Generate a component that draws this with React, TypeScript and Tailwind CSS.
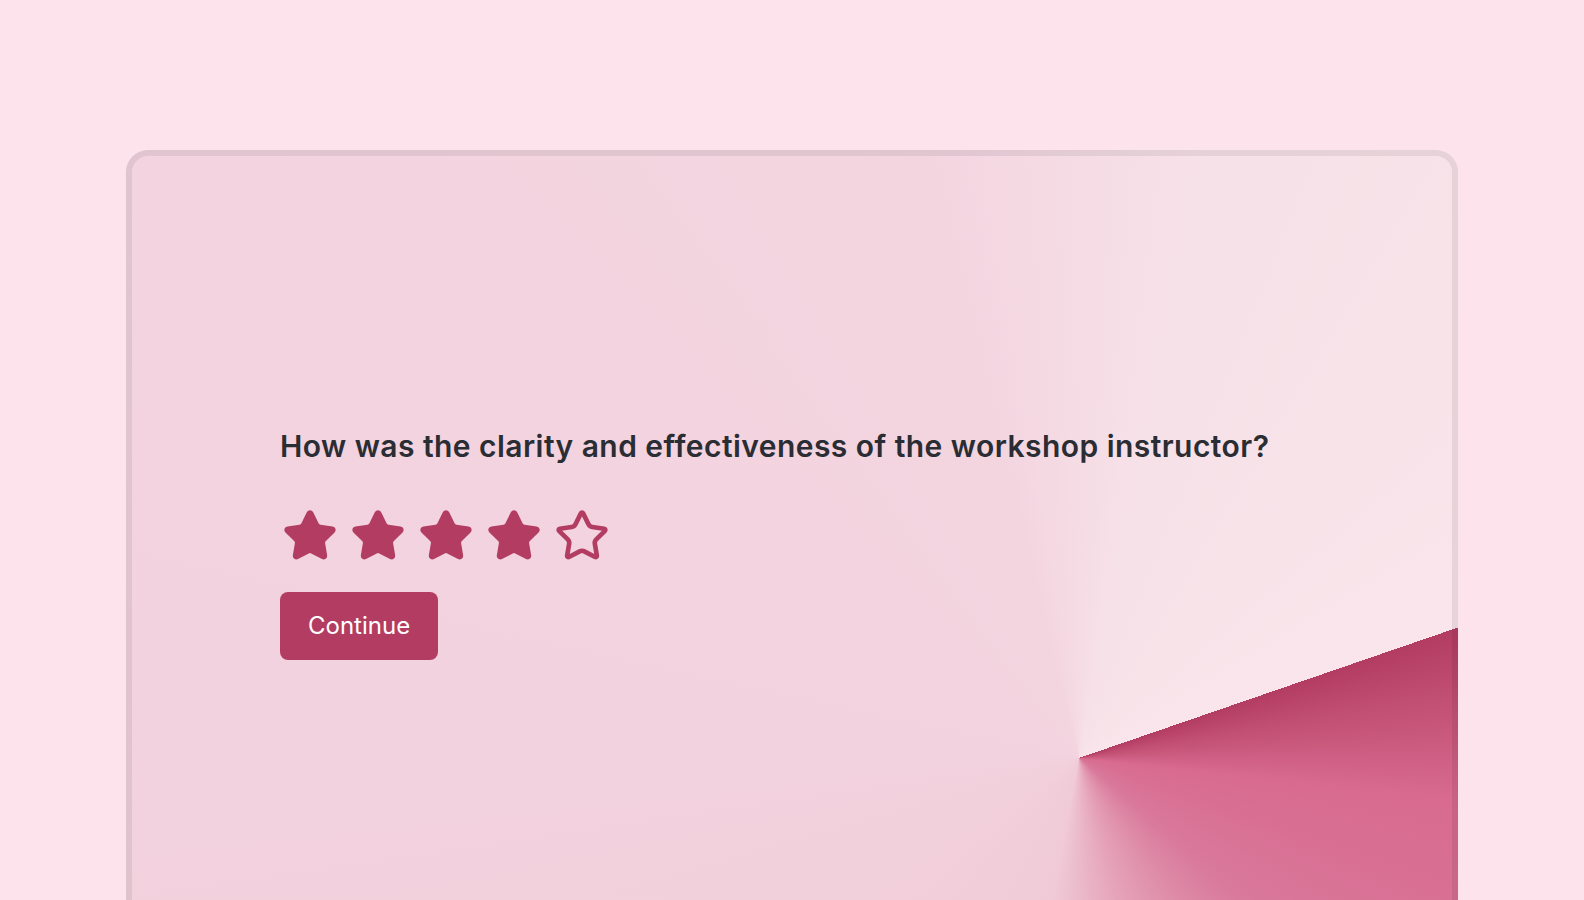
import React from "react";
import { Star } from "lucide-react";

export default function App() {
  const rating = 4;
  return (
    <div className="w-full h-screen overflow-hidden bg-[#fde4ec] pt-[150px] px-[126px]" style={{ fontFamily: "Inter, 'Noto Sans', sans-serif" }}>
      <div className="h-[800px] rounded-[22px] border-[6px] border-black/[0.07] bg-origin-border bg-[conic-gradient(from_71deg_at_953px_608px,#b33d62_0deg,#d86a8f_25deg,#d9799b_60deg,#e6a5ba_95deg,#f0cbd7_120deg,#f2d2de_200deg,#f3d5e0_275deg,#f7e1e8_300deg,#f9e5eb_360deg)] pl-[148px] pt-[272px]">
        <h1 className="text-[30px] leading-[36px] font-semibold text-[#2a2d33] tracking-[0.015em]">
          How was the clarity and effectiveness of the workshop instructor?
        </h1>
        <div className="mt-[44px] ml-[2px] flex items-center gap-[12px]">
          {[1, 2, 3, 4, 5].map((i) => (
            <Star
              key={i}
              size={56}
              strokeWidth={2}
              className="text-[#b33d62]"
              fill={i <= rating ? "#b33d62" : "none"}
            />
          ))}
        </div>
        <button className="mt-[28px] h-[68px] px-[28px] rounded-[8px] bg-[#b33d62] text-white text-[24px] leading-[28px]">
          Continue
        </button>
      </div>
    </div>
  );
}
